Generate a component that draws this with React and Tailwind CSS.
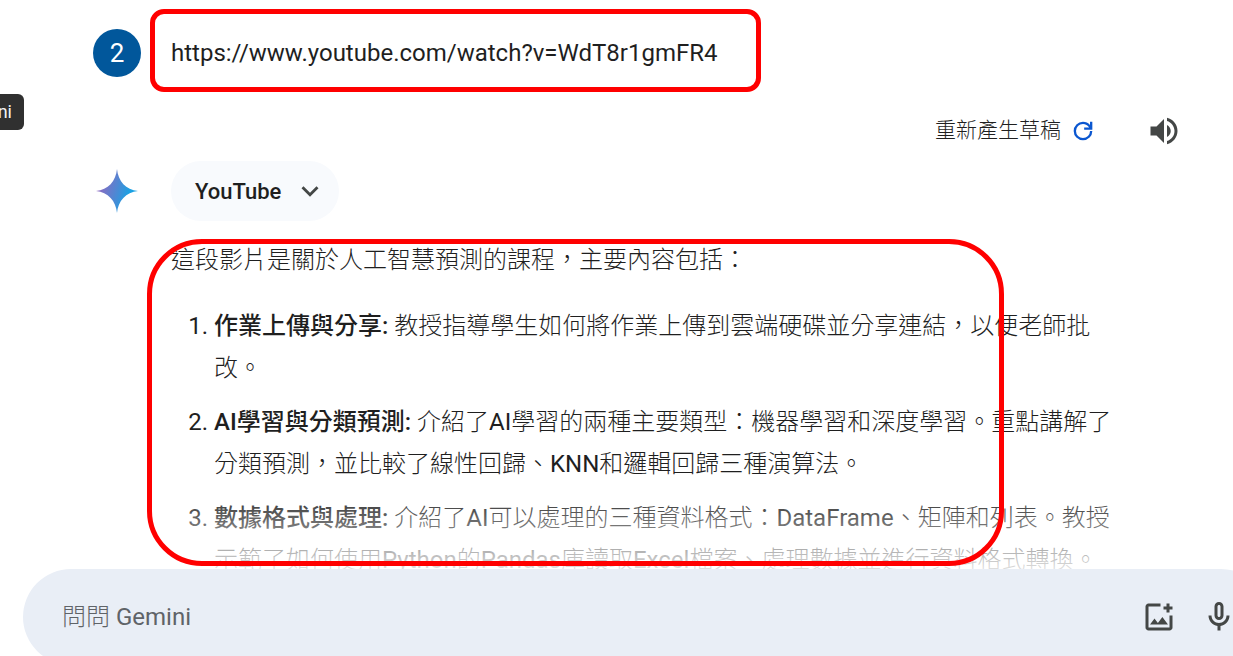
import React from "react";

const points = [
  {
    title: "作業上傳與分享:",
    body: "教授指導學生如何將作業上傳到雲端硬碟並分享連結，以便老師批改。",
  },
  {
    title: "AI學習與分類預測:",
    body: "介紹了AI學習的兩種主要類型：機器學習和深度學習。重點講解了分類預測，並比較了線性回歸、KNN和邏輯回歸三種演算法。",
  },
  {
    title: "數據格式與處理:",
    body: "介紹了AI可以處理的三種資料格式：DataFrame、矩陣和列表。教授示範了如何使用Python的Pandas庫讀取Excel檔案、處理數據並進行資料格式轉換。",
  },
];

function Sparkle() {
  return (
    <svg viewBox="0 0 44 46" className="h-[46px] w-11" aria-hidden="true">
      <defs>
        <linearGradient id="spark" x1="0" y1="0.3" x2="1" y2="0.6">
          <stop offset="0.05" stopColor="#9168c0" />
          <stop offset="0.45" stopColor="#5684d1" />
          <stop offset="0.8" stopColor="#1ba1e3" />
        </linearGradient>
      </defs>
      <path
        fill="url(#spark)"
        d="M22 1C23 13 31 22 43 23C31 24 23 33 22 45C21 33 13 24 1 23C13 22 21 13 22 1Z"
      />
    </svg>
  );
}

function Icon({ d, className }) {
  return (
    <svg viewBox="0 0 24 24" fill="currentColor" className={className} aria-hidden="true">
      <path d={d} />
    </svg>
  );
}

const REFRESH =
  "M12 20q-3.350 0-5.675-2.325T4 12t2.325-5.675T12 4q1.725 0 3.300.713T18 6.750V4h2v7h-7V9h4.200q-.8-1.400-2.187-2.200T12 6Q9.500 6 7.750 7.750T6 12t1.750 4.250T12 18q2.500 0 4.250-1.750T18 12h2q0 3.350-2.325 5.675T12 20z";
const VOLUME =
  "M3 9v6h4l5 5V4L7 9H3zm13.500 3c0-1.770-1.020-3.290-2.500-4.030v8.050c1.480-.73 2.500-2.250 2.500-4.020zM14 3.230v2.060c2.890.86 5 3.540 5 6.710s-2.110 5.850-5 6.710v2.060c4.010-.91 7-4.490 7-8.770s-2.990-7.860-7-8.770z";
const CHEVRON = "M7.410 8.590L12 13.170l4.590-4.580L18 10l-6 6-6-6 1.410-1.410z";
const ADD_IMAGE =
  "M5 21q-.825 0-1.413-.587T3 19V5q0-.825.587-1.413T5 3h8v2H5v14h14v-8h2v8q0 .825-.587 1.413T19 21H5zM17 9V7h-2V5h2V3h2v2h2v2h-2v2h-2zM6 17h12l-3.750-5-3 4L9 13l-3 4z";
const MIC =
  "M12 14c1.660 0 3-1.340 3-3V5c0-1.660-1.340-3-3-3S9 3.340 9 5v6c0 1.660 1.340 3 3 3zm-1-9c0-.55.45-1 1-1s1 .45 1 1v6c0 .55-.45 1-1 1s-1-.45-1-1V5zm6 6c0 2.760-2.240 5-5 5s-5-2.240-5-5H5c0 3.530 2.610 6.430 6 6.920V21h2v-3.080c3.390-.49 6-3.390 6-6.920h-2z";

export default function App() {
  return (
    <div className="relative flex h-screen flex-col overflow-hidden bg-white font-['Roboto','Noto_Sans_CJK_TC_Light','Noto_Sans_CJK_TC',sans-serif] text-[#1f1f1f]">
      <div className="absolute top-[94px] left-0 flex h-9 w-6 items-center justify-end rounded-r-md bg-[#303030] pr-3 text-lg text-[#f2f2f2]">
        ni
      </div>

      <main className="relative min-h-0 flex-1 overflow-hidden pr-[108px] pl-[93px]">
        <section className="flex h-[106px] items-center gap-[30px]">
          <div className="flex size-12 shrink-0 items-center justify-center rounded-full bg-[#01579b] text-[26px] text-white">
            2
          </div>
          <div className="relative text-2xl">
            https://www.youtube.com/watch?v=WdT8r1gmFR4
            <div className="pointer-events-none absolute -top-7 -left-[21px] h-[83px] w-[611px] rounded-[14px] border-5 border-[#ff0000]" />
          </div>
        </section>

        <div className="-mr-[57px] flex h-[50px] items-center justify-end gap-[49px]">
          <button type="button" className="flex items-center gap-2 text-[21px]">
            重新產生草稿
            <Icon d={REFRESH} className="size-7 text-[#0b57d0]" />
          </button>
          <button type="button" aria-label="聆聽" className="text-[#444746]">
            <Icon d={VOLUME} className="size-9" />
          </button>
        </div>

        <section className="mt-[5px] flex items-start gap-8">
          <div className="ml-[2px] flex h-[60px] w-11 shrink-0 items-center">
            <Sparkle />
          </div>
          <div className="relative min-w-0 flex-1">
            <button
              type="button"
              className="flex h-[60px] items-center gap-3 rounded-full bg-[#f8fafd] pr-3 pl-6 text-[22px] font-medium"
            >
              YouTube
              <Icon d={CHEVRON} className="size-[34px] text-[#444746]" />
            </button>
            <div className="mt-[18px] text-2xl leading-[42px]">
              <p>這段影片是關於人工智慧預測的課程，主要內容包括：</p>
              <ol className="mt-6 flex list-decimal flex-col gap-3 pl-[43px]">
                {points.map((point) => (
                  <li key={point.title}>
                    <strong className="font-['Roboto','Noto_Sans_CJK_TC',sans-serif] font-medium">
                      {point.title}
                    </strong>{" "}
                    {point.body}
                  </li>
                ))}
              </ol>
            </div>
            <div className="pointer-events-none absolute top-[78px] -left-6 z-10 h-[327px] w-[857px] rounded-[55px] border-5 border-[#ff0000]" />
          </div>
        </section>
        <div className="pointer-events-none absolute inset-x-0 bottom-0 h-20 bg-linear-to-b from-white/0 to-white/85" />
      </main>

      <form className="-mr-9 -mb-[9px] ml-[23px] flex h-24 shrink-0 items-center gap-6 rounded-full bg-[#e9eef6] pr-8 pl-[39px]">
        <input
          type="text"
          aria-label="問問 Gemini"
          placeholder="問問 Gemini"
          className="min-w-0 flex-1 bg-transparent text-2xl outline-none placeholder:text-[#5f6368]"
        />
        <button type="button" aria-label="上傳圖片" className="text-[#444746]">
          <Icon d={ADD_IMAGE} className="size-9" />
        </button>
        <button type="button" aria-label="使用麥克風" className="text-[#444746]">
          <Icon d={MIC} className="size-9" />
        </button>
      </form>
    </div>
  );
}
